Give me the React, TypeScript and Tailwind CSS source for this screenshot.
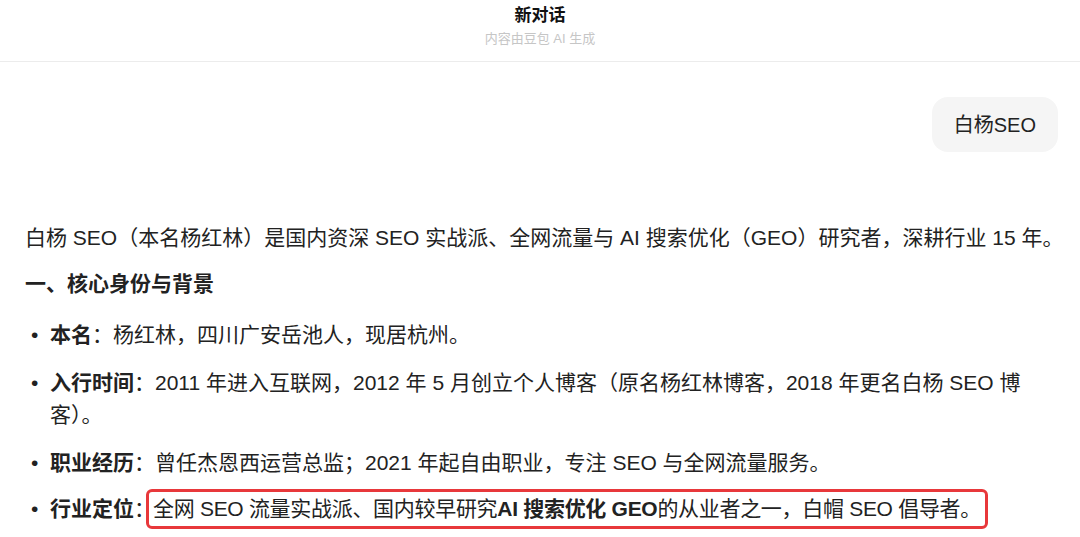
import React from "react";

const font = {
  fontFamily: '"Liberation Sans", "Noto Sans CJK SC", sans-serif',
};

const items = [
  { label: "本名", text: "杨红林，四川广安岳池人，现居杭州。" },
  {
    label: "入行时间",
    text: "2011 年进入互联网，2012 年 5 月创立个人博客（原名杨红林博客，2018 年更名白杨 SEO 博客）。",
  },
  { label: "职业经历", text: "曾任杰恩西运营总监；2021 年起自由职业，专注 SEO 与全网流量服务。" },
];

export default function App() {
  return (
    <div className="h-[537px] w-[1080px] overflow-hidden bg-white text-[#222]" style={font}>
      {/* header */}
      <header className="flex h-[62px] flex-col items-center border-b border-[#ececec] pt-[4px]">
        <div className="text-[17px] font-bold leading-[24px] text-[#111]">新对话</div>
        <div className="mt-[3px] text-[13px] leading-[16px] text-[#c6c6c6]">内容由豆包 AI 生成</div>
      </header>

      {/* user bubble */}
      <div className="flex justify-end pr-[22px] pt-[35px]">
        <div className="flex h-[55px] items-center rounded-[16px] bg-[#f5f5f5] px-[22px] text-[20px] text-[#222]">
          白杨SEO
        </div>
      </div>

      {/* answer */}
      <div className="px-[25px] pt-[70px] text-[21px] leading-[32px]">
        <p className="whitespace-nowrap">
          白杨 SEO（本名杨红林）是国内资深 SEO 实战派、全网流量与 AI 搜索优化（GEO）研究者，深耕行业 15 年。
        </p>
        <h2 className="mt-[14px] font-bold">一、核心身份与背景</h2>
        <ul className="mt-[19px] flex flex-col gap-[16px]">
          {items.map((it) => (
            <li key={it.label} className="flex pr-[20px]">
              <span className="w-[25px] shrink-0 pl-[6px]">•</span>
              <span>
                <b>{it.label}</b>：{it.text}
              </span>
            </li>
          ))}
          <li className="-mt-[2px] flex">
            <span className="w-[25px] shrink-0 pl-[6px]">•</span>
            <span className="whitespace-nowrap">
              <b>行业定位</b>：
              <span className="-ml-[9px] rounded-[6px] border-[3px] border-[#e8383b] px-[4px] pt-[5px] pb-[6px] tracking-[-0.3px]">
                全网 SEO 流量实战派、国内较早研究<b>AI 搜索优化 GEO</b>的从业者之一，白帽 SEO 倡导者。
              </span>
            </span>
          </li>
        </ul>
      </div>
    </div>
  );
}
